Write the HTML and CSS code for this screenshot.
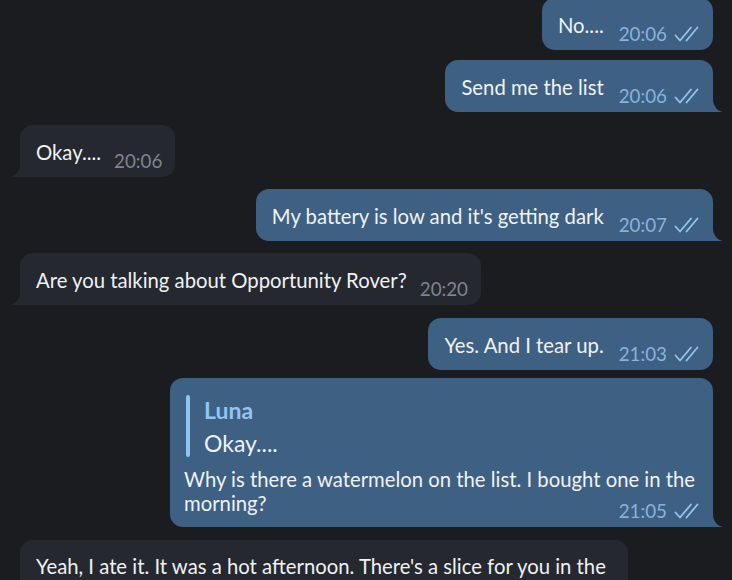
FILE: index.html
```html
<!DOCTYPE html>
<html>
<head>
<meta charset="utf-8">
<link rel="stylesheet" href="styles.css">
</head>
<body>
<div class="chat">
  <div class="msg out first">
    <span class="text">No....</span>
    <span class="meta"><span class="time">20:06</span><svg class="check" viewBox="0 0 27 16"><path d="M1.5 9.5 L6 14.5 L17 1.5 M12.5 14.5 L23.5 1.5"/></svg></span>
  </div>
  <div class="msg out tail g10">
    <span class="text">Send me the list</span>
    <span class="meta"><span class="time">20:06</span><svg class="check" viewBox="0 0 27 16"><path d="M1.5 9.5 L6 14.5 L17 1.5 M12.5 14.5 L23.5 1.5"/></svg></span>
  </div>
  <div class="msg in tail g13">
    <span class="text">Okay....</span>
    <span class="meta"><span class="time">20:06</span></span>
  </div>
  <div class="msg out tail g12">
    <span class="text">My battery is low and it's getting dark</span>
    <span class="meta"><span class="time">20:07</span><svg class="check" viewBox="0 0 27 16"><path d="M1.5 9.5 L6 14.5 L17 1.5 M12.5 14.5 L23.5 1.5"/></svg></span>
  </div>
  <div class="msg in tail g12">
    <span class="text">Are you talking about Opportunity Rover?</span>
    <span class="meta"><span class="time">20:20</span></span>
  </div>
  <div class="msg out g13">
    <span class="text">Yes. And I tear up.</span>
    <span class="meta"><span class="time">21:03</span><svg class="check" viewBox="0 0 27 16"><path d="M1.5 9.5 L6 14.5 L17 1.5 M12.5 14.5 L23.5 1.5"/></svg></span>
  </div>
  <div class="msg out tail col reply-msg g8">
    <div class="reply">
      <div class="bar"></div>
      <div class="reply-body">
        <div class="name">Luna</div>
        <div class="quote">Okay....</div>
      </div>
    </div>
    <div class="ptext">Why is there a watermelon on the list. I bought one in the morning?</div>
    <div class="meta bottom"><span class="time">21:05</span><svg class="check" viewBox="0 0 27 16"><path d="M1.5 9.5 L6 14.5 L17 1.5 M12.5 14.5 L23.5 1.5"/></svg></div>
  </div>
  <div class="msg in col last g13">
    <div class="ptext">Yeah, I ate it. It was a hot afternoon. There's a slice for you in the fridge.</div>
    <div class="meta bottom"><span class="time">21:07</span></div>
  </div>
</div>
</body>
</html>
```

FILE: styles.css
```css
html, body {
  margin: 0;
  padding: 0;
}
body {
  width: 732px;
  height: 580px;
  overflow: hidden;
  background: #1b1c20;
  font-family: Lato, "Noto Sans", sans-serif;
  color: #eef2f6;
}
.chat {
  display: flex;
  flex-direction: column;
  padding: 0 19px 0 20px;
  margin-top: -2px;
}
.msg {
  position: relative;
  display: flex;
  align-items: flex-end;
  border-radius: 13px;
  padding: 14px 12px 6px 16px;
  font-size: 20.3px;
  box-sizing: border-box;
}
.out {
  align-self: flex-end;
  background: #3e6082;
  max-width: 543px;
}
.in {
  align-self: flex-start;
  background: #25282e;
  padding-right: 13px;
  max-width: 608px;
}
.g8 { margin-top: 8px; }
.g10 { margin-top: 10px; }
.g12 { margin-top: 12px; }
.g13 { margin-top: 13px; }

.text {
  line-height: 26px;
  margin-bottom: 6px;
  white-space: nowrap;
}
.meta {
  display: block;
  white-space: nowrap;
  margin-left: 15px;
  line-height: 20px;
  font-size: 18.8px;
}
.in .meta { margin-left: 13px; }
.out .time { color: #88b3dc; }
.in .time { color: #7d8590; }
.check {
  width: 27px;
  height: 16px;
  margin-left: 7px;
  vertical-align: -1px;
  fill: none;
  stroke: #94c5ef;
  stroke-width: 1.8;
  stroke-linecap: round;
  stroke-linejoin: round;
}

/* tails */
.tail::before,
.tail::after {
  content: "";
  position: absolute;
  bottom: 0;
  height: 18px;
}
.out.tail::before {
  right: -10px;
  width: 22px;
  background: #3e6082;
}
.out.tail::after {
  right: -11px;
  width: 11px;
  background: #1b1c20;
  border-bottom-left-radius: 11px 13px;
}
.in.tail::before {
  left: -10px;
  width: 22px;
  background: #25282e;
}
.in.tail::after {
  left: -11px;
  width: 11px;
  background: #1b1c20;
  border-bottom-right-radius: 11px 13px;
}

/* column messages */
.col {
  flex-direction: column;
  align-items: stretch;
}
.reply-msg {
  padding: 17px 12px 6px 14px;
}
.reply {
  display: flex;
  margin-left: 2px;
  margin-bottom: 10px;
  font-size: 23px;
}
.bar {
  width: 4px;
  border-radius: 2px;
  background: #8dc4f3;
  margin-right: 14px;
}
.name {
  font-weight: 700;
  color: #92c5f2;
  line-height: 30px;
}
.quote {
  line-height: 28px;
  margin-top: 4px;
}
.ptext {
  line-height: 24px;
}
.meta.bottom {
  align-self: flex-end;
  margin-top: -14px;
}
.last {
  padding-top: 14px;
}
```
